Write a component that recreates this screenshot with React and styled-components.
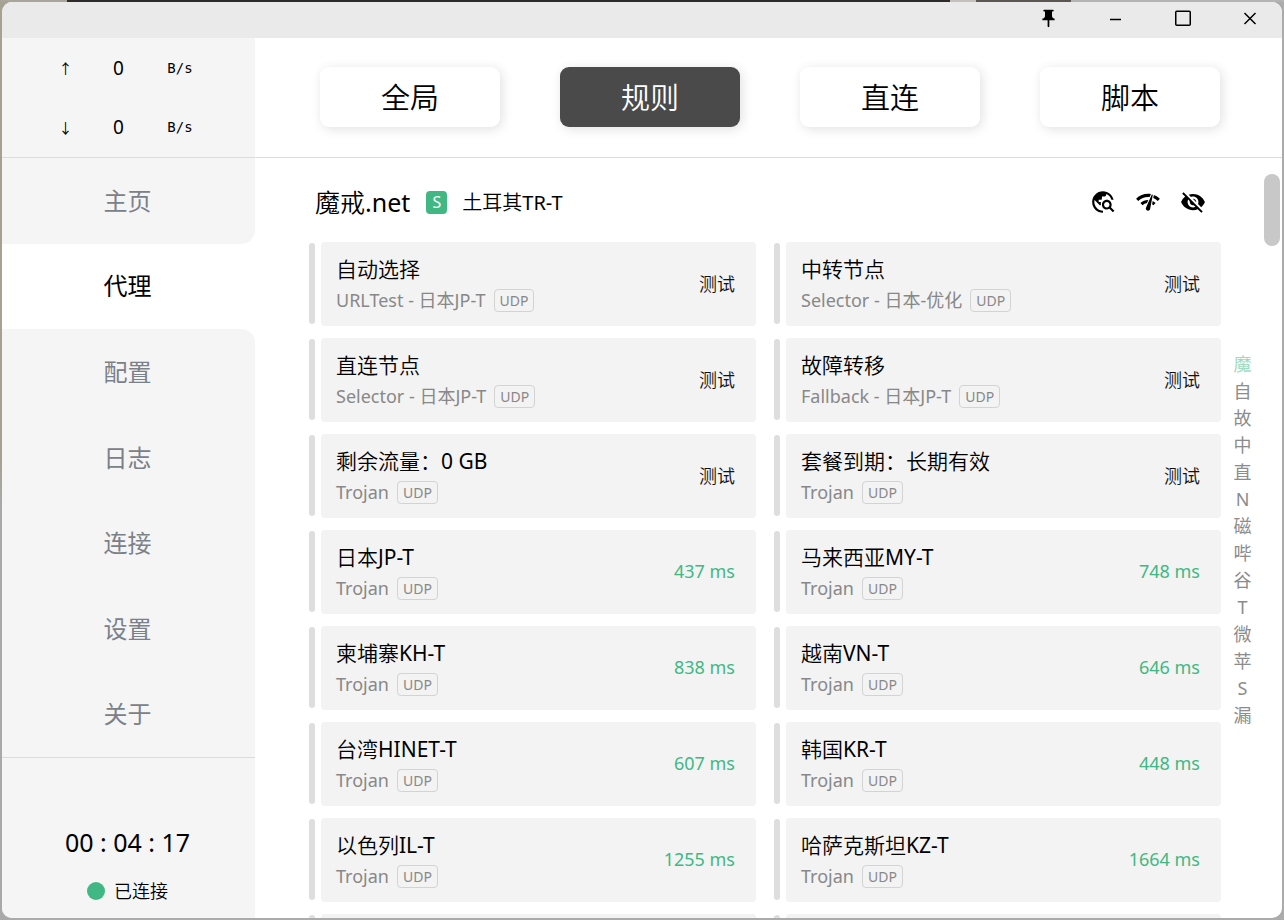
import React from "react";
import styled, { createGlobalStyle } from "styled-components";
import {
  MdPushPin,
  MdTravelExplore,
  MdNetworkCheck,
  MdVisibilityOff,
} from "react-icons/md";

const thinHan = `"Noto Sans", "Noto Sans CJK SC DemiLight", "Noto Sans CJK SC", sans-serif`;

const GlobalStyle = createGlobalStyle`
  *, *::before, *::after { box-sizing: border-box; }
  body {
    margin: 0;
    font-family: "Noto Sans", "Noto Sans CJK SC", sans-serif;
    color: #000;
    background:
      linear-gradient(90deg, #aaa59b 0 67px, #2e2b2c 67px 74%, #c4c0bd 74% 76%, #5c5653 76% 1071px, #b4b4b4 1071px) top / 100% 2px no-repeat,
      linear-gradient(180deg, #a5a293 0 50%, #a9a9a9 55%) left / 8px 100% no-repeat,
      #ababab;
  }
  button { font: inherit; color: inherit; border: 0; background: none; padding: 0; cursor: pointer; }
  a { color: inherit; text-decoration: none; }
`;

const Desktop = styled.div`
  height: 100vh;
  padding: 2px;
`;

const AppWindow = styled.div`
  height: 100%;
  display: flex;
  flex-direction: column;
  background: #fff;
  border-radius: 10px;
  overflow: hidden;
`;

const TitleBar = styled.header`
  height: 36px;
  flex: none;
  display: flex;
  justify-content: flex-end;
  align-items: stretch;
  background: #eaeaea;
`;

const WindowButton = styled.button`
  && {
    width: 67px;
    display: flex;
    align-items: center;
    justify-content: center;
    padding: 0 0 4px 2px;
  }
`;

const TopRow = styled.div`
  display: flex;
  flex: none;
  height: 120px;
  border-bottom: 1px solid #dcdcdc;
`;

const Traffic = styled.div`
  width: 253px;
  flex: none;
  display: grid;
  grid-template-rows: 1fr 1fr;
  background: #f5f5f5;
`;

const TrafficLine = styled.div`
  display: grid;
  grid-template-columns: 36px 70px 53px;
  justify-content: center;
  align-items: center;
  padding-right: 3px;
  text-align: center;
  font-family: "DejaVu Sans Mono", monospace;
  font-size: 14px;
`;

const TrafficArrow = styled.span`
  font-family: "Noto Sans CJK SC", sans-serif;
  font-size: 14px;
`;

const TrafficValue = styled.span`
  font-family: "Noto Sans", sans-serif;
  font-size: 19px;
`;

const Modes = styled.div`
  flex: 1;
  display: grid;
  grid-template-columns: repeat(4, 1fr);
  gap: 60px;
  align-items: center;
  padding: 0 62px 2px 65px;
`;

const ModeButton = styled.button`
  && {
    height: 60px;
    padding-bottom: 2px;
    border-radius: 9px;
    font-family: ${thinHan};
    font-size: 29px;
    background: ${(p) => (p.$active ? "#4a4a4a" : "#fff")};
    color: ${(p) => (p.$active ? "#fff" : "#000")};
    box-shadow: 2px 2px 12px rgba(0, 0, 0, 0.12);
  }
`;

const Body = styled.div`
  flex: 1;
  min-height: 0;
  display: flex;
`;

const Sidebar = styled.aside`
  width: 253px;
  flex: none;
  display: flex;
  flex-direction: column;
`;

const Nav = styled.nav`
  flex: 1;
  display: flex;
  flex-direction: column;
`;

const NavLink = styled.a`
  flex: 1;
  display: flex;
  align-items: center;
  justify-content: center;
  padding: 0 2px 3px 0;
  font-size: 24px;
  && { color: ${(p) => (p.$active ? "#000" : "#7b8189")}; }
  background: ${(p) => (p.$active ? "#fff" : "#f5f5f5")};
  border-radius: 0 ${(p) => (p.$after ? 14 : 0)}px ${(p) => (p.$before ? 14 : 0)}px 0;
`;

const Session = styled.div`
  height: 161px;
  flex: none;
  display: flex;
  flex-direction: column;
  align-items: center;
  padding: 66px 2px 0 0;
  gap: 18px;
  border-top: 1px solid #dcdcdc;
  background: #f5f5f5;
`;

const Clock = styled.div`
  font-size: 25px;
  line-height: 36px;
`;

const Status = styled.div`
  display: flex;
  align-items: center;
  gap: 9px;
  font-family: ${thinHan};
  font-size: 18px;
  line-height: 26px;
`;

const StatusDot = styled.span`
  width: 18px;
  height: 18px;
  border-radius: 50%;
  background: #41b883;
`;

const Main = styled.main`
  flex: 1;
  min-width: 0;
  overflow: hidden;
  padding-left: 54px;
`;

const GroupHeader = styled.div`
  height: 84px;
  display: flex;
  align-items: center;
  padding: 4px 15px 0 6px;
`;

const GroupName = styled.h1`
  margin: 0 16px 0 0;
  padding-bottom: 2px;
  font-family: ${thinHan};
  font-size: 25px;
  font-weight: 400;
`;

const GroupType = styled.span`
  width: 21px;
  height: 23px;
  margin-right: 15px;
  border-radius: 4px;
  background: #41b883;
  color: #fff;
  font-size: 16px;
  line-height: 23px;
  text-align: center;
`;

const GroupNow = styled.span`
  font-family: ${thinHan};
  font-size: 20px;
  padding-bottom: 2px;
`;

const GroupActions = styled.div`
  margin-left: auto;
  display: flex;
  gap: 19px;
`;

const IconButton = styled.button`
  display: flex;
`;

const Proxies = styled.div`
  display: grid;
  grid-template-columns: 1fr 1fr;
  gap: 12px 18px;
`;

const Proxy = styled.article`
  display: flex;
  gap: 6px;
  height: 84px;
`;

const ProxyBar = styled.span`
  width: 6px;
  flex: none;
  margin: 1px 0 2px;
  border-radius: 3px;
  background: #dedede;
`;

const ProxyCard = styled.div`
  flex: 1;
  min-width: 0;
  display: flex;
  align-items: center;
  justify-content: space-between;
  padding: 0 21px 0 15px;
  border-radius: 4px;
  background: #f3f3f3;
`;

const ProxyName = styled.div`
  font-family: ${thinHan};
  font-size: 21px;
  line-height: 32px;
`;

const ProxyMeta = styled.div`
  display: flex;
  align-items: center;
  gap: 8px;
  font-size: 18px;
  line-height: 30px;
  color: #888;
`;

const Badge = styled.span`
  height: 23px;
  padding: 0 5px;
  border: 1px solid #d3d3d3;
  border-radius: 4px;
  font-size: 14px;
  line-height: 21px;
`;

const Delay = styled.button`
  && {
    padding-bottom: 2px;
    font-family: ${thinHan};
    font-size: 18px;
    color: ${(p) => (p.$measured ? "#41b883" : "#111")};
  }
`;

const LetterIndex = styled.nav`
  width: 43px;
  flex: none;
  display: flex;
  flex-direction: column;
  align-items: center;
  justify-content: center;
  padding-top: 3px;
`;

const Letter = styled.a`
  font-size: 18px;
  line-height: 27px;
  && { color: ${(p) => (p.$current ? "#a0dcc1" : "#8c8c8c")}; }
`;

const ScrollTrack = styled.div`
  width: 16px;
  flex: none;
  margin: 16px 2px 0 0;
`;

const ScrollThumb = styled.div`
  height: 72px;
  border-radius: 8px;
  background: #c8c8c8;
`;

const modes = ["全局", "规则", "直连", "脚本"];
const pages = ["主页", "代理", "配置", "日志", "连接", "设置", "关于"];
const letters = "魔自故中直N磁哔谷T微苹S漏".split("");
const proxies = [
  ["自动选择", "URLTest - 日本JP-T"],
  ["中转节点", "Selector - 日本-优化"],
  ["直连节点", "Selector - 日本JP-T"],
  ["故障转移", "Fallback - 日本JP-T"],
  ["剩余流量：0 GB", "Trojan"],
  ["套餐到期：长期有效", "Trojan"],
  ["日本JP-T", "Trojan", 437],
  ["马来西亚MY-T", "Trojan", 748],
  ["柬埔寨KH-T", "Trojan", 838],
  ["越南VN-T", "Trojan", 646],
  ["台湾HINET-T", "Trojan", 607],
  ["韩国KR-T", "Trojan", 448],
  ["以色列IL-T", "Trojan", 1255],
  ["哈萨克斯坦KZ-T", "Trojan", 1664],
];

export default function App() {
  const activePage = 1;
  return (
    <Desktop>
      <GlobalStyle />
      <AppWindow>
        <TitleBar>
          <WindowButton aria-label="置顶"><MdPushPin size={21} /></WindowButton>
          <WindowButton aria-label="最小化">
            <svg width="18" height="18" viewBox="0 0 18 18"><path d="M3 10.5h11" stroke="#000" strokeWidth="1.5" /></svg>
          </WindowButton>
          <WindowButton aria-label="最大化">
            <svg width="18" height="18" viewBox="0 0 18 18"><rect x="1.75" y="2.25" width="14.5" height="14" rx="1" fill="none" stroke="#000" strokeWidth="1.5" /></svg>
          </WindowButton>
          <WindowButton aria-label="关闭">
            <svg width="18" height="18" viewBox="0 0 18 18"><path d="M3.5 4l11 11M14.5 4l-11 11" stroke="#000" strokeWidth="1.5" /></svg>
          </WindowButton>
        </TitleBar>
        <TopRow>
          <Traffic>
            {["↑", "↓"].map((arrow) => (
              <TrafficLine key={arrow}>
                <TrafficArrow>{arrow}</TrafficArrow>
                <TrafficValue>0</TrafficValue>
                <span>B/s</span>
              </TrafficLine>
            ))}
          </Traffic>
          <Modes>
            {modes.map((m, i) => (
              <ModeButton key={m} $active={i === 1}>{m}</ModeButton>
            ))}
          </Modes>
        </TopRow>
        <Body>
          <Sidebar>
            <Nav>
              {pages.map((p, i) => (
                <NavLink
                  key={p}
                  href="#"
                  $active={i === activePage}
                  $before={i === activePage - 1}
                  $after={i === activePage + 1}
                >
                  {p}
                </NavLink>
              ))}
            </Nav>
            <Session>
              <Clock>00 : 04 : 17</Clock>
              <Status><StatusDot />已连接</Status>
            </Session>
          </Sidebar>
          <Main>
            <GroupHeader>
              <GroupName>魔戒.net</GroupName>
              <GroupType>S</GroupType>
              <GroupNow>土耳其TR-T</GroupNow>
              <GroupActions>
                <IconButton aria-label="定位"><MdTravelExplore size={26} /></IconButton>
                <IconButton aria-label="测速"><MdNetworkCheck size={26} /></IconButton>
                <IconButton aria-label="隐藏"><MdVisibilityOff size={26} /></IconButton>
              </GroupActions>
            </GroupHeader>
            <Proxies>
              {proxies.map(([name, meta, ms]) => (
                <Proxy key={name}>
                  <ProxyBar />
                  <ProxyCard>
                    <div>
                      <ProxyName>{name}</ProxyName>
                      <ProxyMeta>{meta}<Badge>UDP</Badge></ProxyMeta>
                    </div>
                    <Delay $measured={Boolean(ms)}>{ms ? `${ms} ms` : "测试"}</Delay>
                  </ProxyCard>
                </Proxy>
              ))}
              <Proxy><ProxyBar /><ProxyCard /></Proxy>
              <Proxy><ProxyBar /><ProxyCard /></Proxy>
            </Proxies>
          </Main>
          <LetterIndex>
            {letters.map((l, i) => (
              <Letter key={l} href="#" $current={i === 0}>{l}</Letter>
            ))}
          </LetterIndex>
          <ScrollTrack><ScrollThumb /></ScrollTrack>
        </Body>
      </AppWindow>
    </Desktop>
  );
}
